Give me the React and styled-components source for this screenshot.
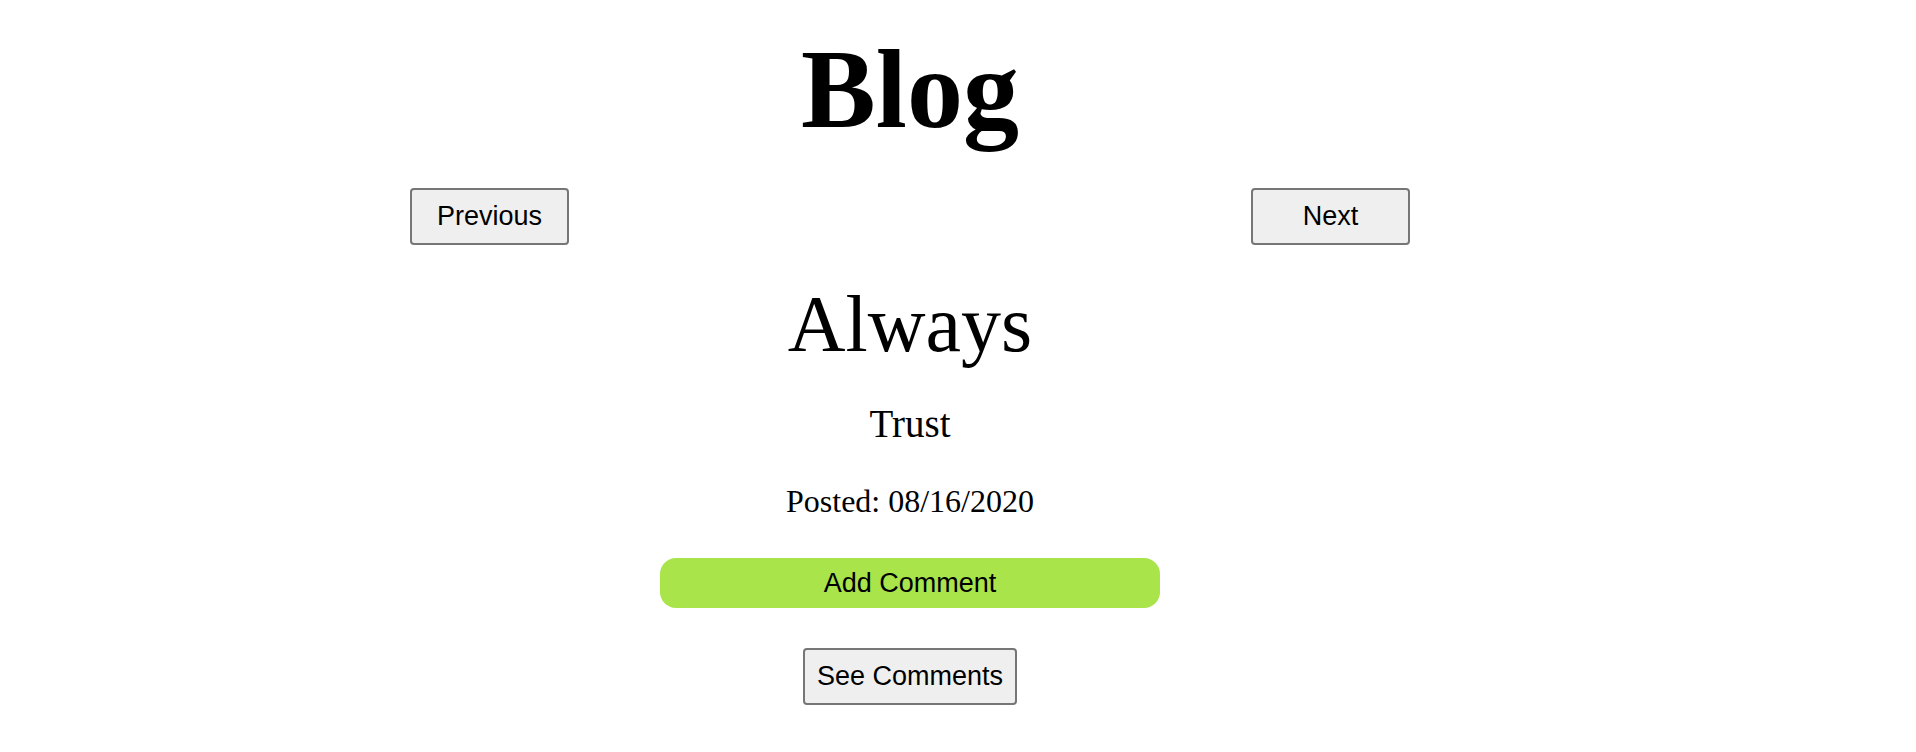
import styled, { createGlobalStyle } from "styled-components";

const GlobalStyle = createGlobalStyle`
  body {
    margin: 0;
    background: #ffffff;
    color: #000000;
    font-family: "Liberation Serif", "Times New Roman", serif;
  }
`;

const Page = styled.main`
  width: 1820px;
  display: flex;
  flex-direction: column;
  align-items: center;
  padding-top: 33px;
`;

const Title = styled.h1`
  margin: 0;
  font-size: 112px;
  font-weight: 700;
  line-height: 1;
`;

const Nav = styled.nav`
  width: 1000px;
  margin-top: 43px;
  display: flex;
  justify-content: space-between;
`;

const Button = styled.button`
  box-sizing: border-box;
  height: 57px;
  width: ${({ $wide }) => ($wide ? "159px" : "auto")};
  padding: 0 12px;
  margin-top: ${({ $top }) => $top || "0"};
  font-family: "Liberation Sans", Arial, sans-serif;
  font-size: 27px;
  color: #000;
  background: #efefef;
  border: 2px solid #767676;
  border-radius: 4px;
  cursor: pointer;
`;

const PostTitle = styled.h2`
  margin: 39px 0 0;
  font-size: 80px;
  font-weight: 400;
  line-height: 1;
`;

const Subtitle = styled.h3`
  margin: 40px 0 0;
  font-size: 39px;
  font-weight: 400;
  line-height: 1;
`;

const Meta = styled.p`
  margin: 42px 0 0;
  font-size: 32px;
  line-height: 1;
`;

const AddButton = styled.button`
  box-sizing: border-box;
  width: 500px;
  height: 50px;
  margin-top: 41px;
  font-family: "Liberation Sans", Arial, sans-serif;
  font-size: 27px;
  color: #000;
  background: #a8e44a;
  border: none;
  border-radius: 16px;
  cursor: pointer;
`;

const App = () => {
  const post = { title: "Always", body: "Trust", date: "08/16/2020" };

  return (
    <>
      <GlobalStyle />
      <Page>
        <Title>Blog</Title>
        <Nav>
          <Button $wide>Previous</Button>
          <Button $wide>Next</Button>
        </Nav>
        <PostTitle>{post.title}</PostTitle>
        <Subtitle>{post.body}</Subtitle>
        <Meta>Posted: {post.date}</Meta>
        <AddButton>Add Comment</AddButton>
        <Button $top="40px">See Comments</Button>
      </Page>
    </>
  );
};

export default App;
